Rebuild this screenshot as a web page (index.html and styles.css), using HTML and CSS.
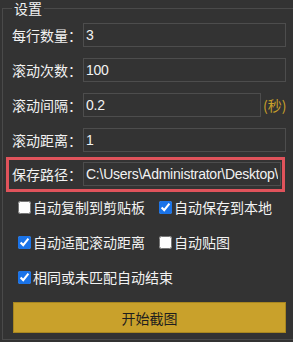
FILE: index.html
```html
<!DOCTYPE html>
<html lang="zh-CN">
<head>
    <meta charset="UTF-8">
    <meta name="viewport" content="width=device-width, initial-scale=1.0">
    <title>设置</title>
    <link rel="stylesheet" href="styles.css">
</head>
<body>

<fieldset class="settings">
    <legend>设置</legend>

    <div class="fields">
        <div class="row">
            <label class="label">每行数量：</label>
            <input class="field" type="text" value="3">
        </div>
        <div class="row">
            <label class="label">滚动次数：</label>
            <input class="field" type="text" value="100">
        </div>
        <div class="row">
            <label class="label">滚动间隔：</label>
            <input class="field short" type="text" value="0.2">
            <span class="unit">(秒)</span>
        </div>
        <div class="row">
            <label class="label">滚动距离：</label>
            <input class="field" type="text" value="1">
        </div>
        <!-- highlighted path row -->
        <div class="row path-row">
            <label class="label">保存路径：</label>
            <input class="field" type="text" value="C:\Users\Administrator\Desktop\histories">
        </div>
    </div>

    <div class="checks">
        <label class="check"><input type="checkbox">自动复制到剪贴板</label>
        <label class="check"><input type="checkbox" checked>自动保存到本地</label>
        <label class="check"><input type="checkbox" checked>自动适配滚动距离</label>
        <label class="check"><input type="checkbox">自动贴图</label>
        <label class="check wide"><input type="checkbox" checked>相同或未匹配自动结束</label>
    </div>

    <button class="start" type="button">开始截图</button>
</fieldset>

</body>
</html>
```

FILE: styles.css
```css
* {
    margin: 0;
    padding: 0;
    box-sizing: border-box;
}

html, body {
    width: 100%;
    height: 100%;
    overflow: hidden;
    background-color: #333333;
    color: #f2f2f2;
    font-family: "Liberation Sans", "Noto Sans CJK SC", sans-serif;
    font-size: 14px;
}

.settings {
    margin-left: 2px;
    width: 293px;
    padding: 0 8px 6px 9px;
    border: 1px solid #4a4a4a;
}

.settings legend {
    padding: 0 2px;
    font-size: 14px;
    line-height: 17px;
    font-family: "Noto Sans CJK SC", sans-serif;
}

.fields {
    padding-top: 6px;
}

.row {
    display: flex;
    align-items: center;
    height: 24px;
    margin-bottom: 11px;
}

.label {
    width: 71px;
    flex-shrink: 0;
    font-family: "Noto Sans CJK SC", sans-serif;
    white-space: nowrap;
}

.field {
    flex: 1;
    min-width: 0;
    height: 24px;
    padding: 0 2px;
    background: #333333;
    border: 1px solid #4d4d4d;
    color: #f2f2f2;
    font-family: "Liberation Sans", "Noto Sans CJK SC", sans-serif;
    font-size: 14px;
    letter-spacing: -0.25px;
    outline: none;
}

.field.short {
    flex: none;
    width: 178px;
}

.unit {
    margin-left: 2px;
    color: #c9a02a;
    font-size: 14px;
    font-family: "Noto Sans CJK SC", sans-serif;
}

.path-row {
    height: 35px;
    margin: -6px 1px 0 -6px;
    padding: 2px 1px 3px 3px;
    border: 3px solid #e0535b;
}

.checks {
    display: grid;
    grid-template-columns: 141px 1fr;
    row-gap: 15px;
    padding: 5px 0 0 6px;
}

.check {
    display: flex;
    align-items: center;
    height: 20px;
    font-family: "Noto Sans CJK SC", sans-serif;
    white-space: nowrap;
}

.check input {
    width: 13px;
    height: 13px;
    margin: 0 2px 0 0;
    accent-color: #1a73e8;
}

.check.wide {
    grid-column: 1 / 3;
}

.start {
    display: block;
    width: 273px;
    height: 31px;
    margin-top: 15px;
    margin-left: 1px;
    background: #c9a12b;
    border: 1px solid #a88620;
    color: #1e1e1e;
    font-family: "Noto Sans CJK SC", sans-serif;
    font-size: 14px;
}
```
